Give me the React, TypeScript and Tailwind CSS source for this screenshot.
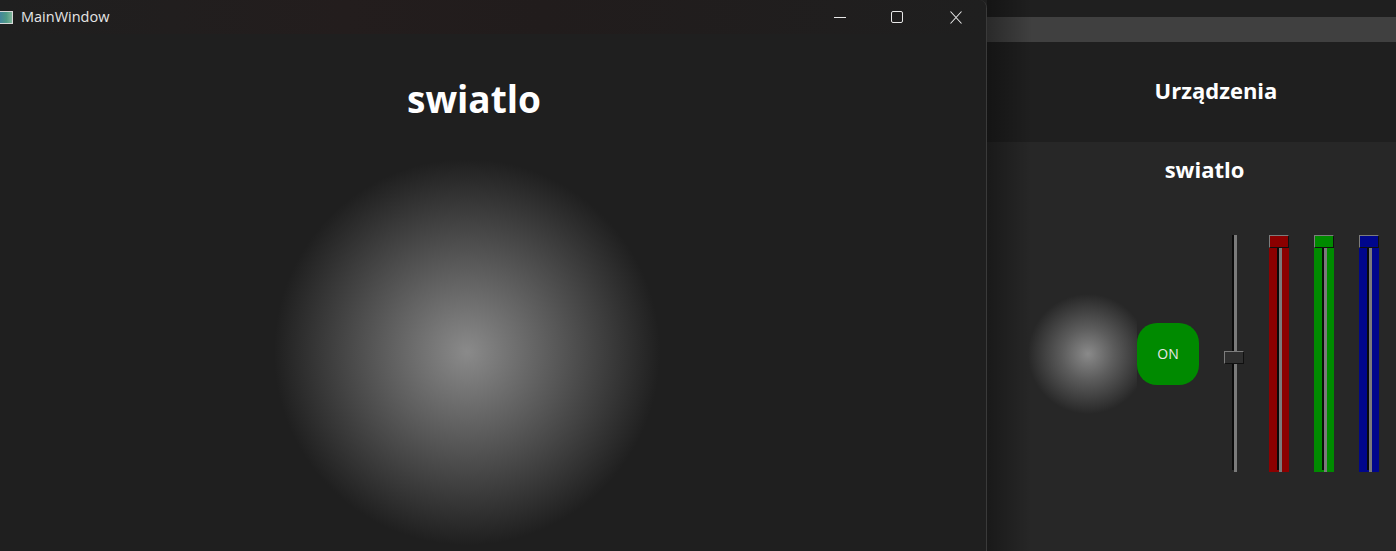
import React from "react";

// one vertical slider: groove + handle, colored ones are filled below the handle
function Slider({ fill, handle, pos }: { fill?: string; handle: string; pos: number }) {
  return (
    <div className="relative h-[237px] w-[20px]">
      {fill && <div className="absolute inset-x-0 bottom-0" style={{ top: pos + 12, background: fill }} />}
      {/* groove */}
      <div className="absolute top-0 bottom-0 left-[8px] flex">
        <div className="h-[235px] w-[2px] bg-[#0a0a0a]" />
        <div className="h-[237px] w-[3px] bg-[#7a7a7a]" />
      </div>
      <div
        className="absolute left-0 h-[13px] w-[20px] border border-[#7c7c7c] border-r-[#101010] border-b-[#101010]"
        style={{ top: pos, background: handle }}
      />
    </div>
  );
}

function WindowControls() {
  return (
    <div className="ml-auto flex items-center">
      <svg width="12" height="12" viewBox="0 0 12 12" className="mr-[45px]">
        <path d="M0 6.5h12" stroke="#e8e8e8" strokeWidth="1" />
      </svg>
      <svg width="12" height="12" viewBox="0 0 12 12" className="mr-[47px]">
        <rect x="0.5" y="0.5" width="11" height="11" rx="1.5" fill="none" stroke="#e8e8e8" strokeWidth="1" />
      </svg>
      <svg width="12" height="13" viewBox="0 0 12 13" className="mr-[24px]">
        <path d="M0.5 0.5L11.5 12.5M11.5 0.5L0.5 12.5" stroke="#e8e8e8" strokeWidth="1.1" />
      </svg>
    </div>
  );
}

export default function App() {
  return (
    <div className="flex h-[551px] w-[1396px] overflow-hidden bg-[#1f1f1f] font-['Open_Sans',sans-serif] text-white">
      {/* main window */}
      <div className="flex w-[987px] shrink-0 flex-col overflow-hidden rounded-tr-[8px] border-r border-[#3a3a3a] bg-[#1f1f1f]">
        <div className="flex h-[34px] shrink-0 items-center bg-[linear-gradient(90deg,#1f1f1f_0%,#231d1d_35%,#211c1c_55%,#1f1f1f_100%)]">
          <div className="-ml-[3px] h-[13px] w-[16px] border border-[#d8d8d8] bg-[linear-gradient(90deg,#3f7fa3,#4f9a86_60%,#7fb59a)]" />
          <span className="ml-[8px] text-[14.5px] leading-none text-[#e6e6e6]">MainWindow</span>
          <WindowControls />
        </div>
        <div className="flex flex-1 flex-col items-center pr-[38px]">
          <h1 className="mt-[46px] text-[37px] leading-none font-bold">swiatlo</h1>
          <div className="mt-[42px] mr-[14px] h-[386px] w-[386px] shrink-0 bg-[radial-gradient(circle_closest-side,#8a8a8a_0%,#5a5a5a_45%,#1f1f1f_100%)]" />
        </div>
      </div>

      {/* device panel behind */}
      <div className="relative flex flex-1 flex-col">
        <div className="h-[17px] bg-[#1f1f1f]" />
        <div className="h-[25px] bg-[#404040]" />
        <div className="flex h-[100px] items-center justify-center bg-[#1f1f1f] pb-[4px] pl-[49px]">
          <h2 className="text-[22px] leading-none font-bold">Urządzenia</h2>
        </div>
        <div className="flex flex-1 flex-col bg-[#272727]">
          <h3 className="pt-[16px] pl-[26px] text-center text-[22px] leading-none font-bold">swiatlo</h3>
          <div className="mt-[55px] flex items-center pl-[41px]">
            <div className="h-[120px] w-[109px] bg-[radial-gradient(circle_at_60px_60px,#8a8a8a_0px,#5c5c5c_26px,#272727_60px)]" />
            <button className="flex h-[62px] w-[62px] items-center justify-center rounded-[20px] bg-[#008a00] text-[14px] text-[#e8e8e8]">
              ON
            </button>
            <div className="ml-[25px] flex gap-[25px]">
              <Slider handle="#2f2f2f" pos={116} />
              <Slider fill="#8b0000" handle="#8b0000" pos={0} />
              <Slider fill="#008a00" handle="#008a00" pos={0} />
              <Slider fill="#00068c" handle="#00068c" pos={0} />
            </div>
          </div>
        </div>
        {/* shadow cast by the main window */}
        <div className="pointer-events-none absolute inset-y-0 left-0 w-[45px] bg-[linear-gradient(90deg,rgba(0,0,0,0.35),rgba(0,0,0,0))]" />
      </div>
    </div>
  );
}
